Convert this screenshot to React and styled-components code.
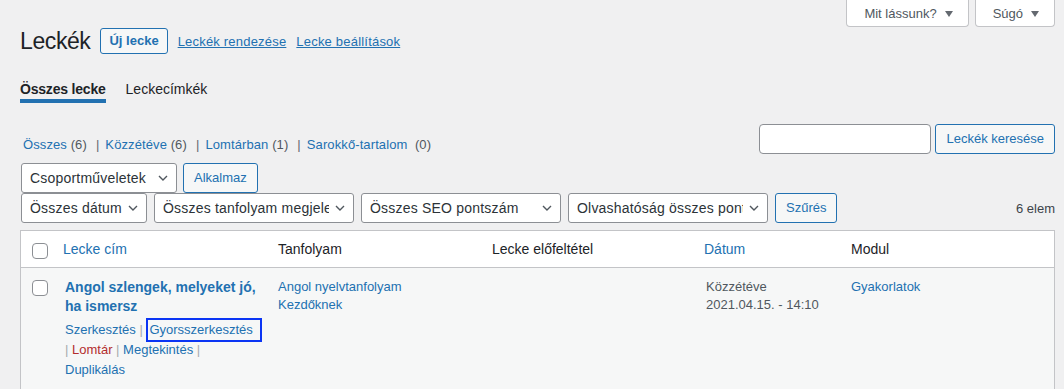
import React from 'react';
import styled, { createGlobalStyle } from 'styled-components';

const GlobalStyle = createGlobalStyle`
  html, body {
    margin: 0;
    background: #f0f0f1;
  }
  body {
    font-family: "Liberation Sans", Arial, sans-serif;
    font-size: 13px;
    color: #3c434a;
  }
  a {
    color: #2271b1;
    text-decoration: none;
  }
`;

// table column widths, shared by header and rows
const columns = '34px 213px 214px 214px 145px 1fr';

const Page = styled.div`
  padding: 0 9px 0 20px;
`;

/* screen options / help tabs */
const ScreenMeta = styled.div`
  display: flex;
  justify-content: flex-end;
  gap: 6px;
`;

const MetaButton = styled.button`
  height: 27px;
  box-sizing: border-box;
  display: flex;
  align-items: center;
  gap: 8px;
  padding: 0 15px 0 17px;
  margin: 0;
  background: #fff;
  border: 1px solid #c3c4c7;
  border-top: 0;
  border-radius: 0 0 4px 4px;
  color: #50575e;
  font-family: inherit;
  font-size: 13px;
`;

const Caret = styled.span`
  width: 0;
  height: 0;
  border-left: 4px solid transparent;
  border-right: 4px solid transparent;
  border-top: 6px solid #646970;
  margin-top: 1px;
`;

/* heading */
const TitleRow = styled.div`
  display: flex;
  align-items: center;
  gap: 10px;
  height: 26px;
  margin-top: 1px;
`;

const Heading = styled.h1`
  margin: 0;
  font-size: 23px;
  font-weight: 400;
  line-height: 26px;
  letter-spacing: -0.4px;
  color: #1d2327;
`;

const TitleAction = styled.a`
  box-sizing: border-box;
  height: 26px;
  padding: 0 8px;
  border: 1px solid #2271b1;
  border-radius: 3px;
  background: #f6f7f7;
  font-size: 13px;
  font-weight: 600;
  line-height: 24px;
`;

const TitleLink = styled.a`
  font-size: 13px;
  letter-spacing: 0.2px;
  text-decoration: underline !important;
`;

/* tabs */
const Tabs = styled.nav`
  display: flex;
  gap: 20px;
  margin-top: 26px;
`;

const Tab = styled.a`
  font-size: 14px;
  line-height: 18px;
  color: #1d2327;
  font-weight: ${(p) => (p.$active ? 600 : 400)};
  letter-spacing: ${(p) => (p.$active ? '-0.2px' : '0')};
  padding-bottom: 1px;
  border-bottom: 4px solid ${(p) => (p.$active ? '#2271b1' : 'transparent')};
`;

/* views + search */
const ListHeader = styled.div`
  display: flex;
  justify-content: space-between;
  align-items: flex-end;
  margin-top: 21px;
`;

const Views = styled.div`
  line-height: 18px;
  color: #50575e;
  padding-left: 3px;
  letter-spacing: 0.1px;
  white-space: nowrap;
`;

const Count = styled.span`
  color: #50575e;
`;

const ViewSep = styled.span`
  display: inline-block;
  margin: 0 6px 0 9px;
  color: #646970;
`;

const SearchBox = styled.div`
  display: flex;
  gap: 4px;
`;

const SearchInput = styled.input`
  width: 172px;
  height: 30px;
  box-sizing: border-box;
  margin: 0;
  padding: 0 8px;
  border: 1px solid #8c8f94;
  border-radius: 4px;
  background: #fff;
  font-family: inherit;
  font-size: 14px;
`;

const Button = styled.button`
  height: 30px;
  box-sizing: border-box;
  margin: 0;
  padding: 0 10px;
  border: 1px solid #2271b1;
  border-radius: 3px;
  background: #f6f7f7;
  color: #2271b1;
  font-family: inherit;
  font-size: 13px;
  line-height: 28px;
  white-space: nowrap;
`;

/* bulk actions and filters */
const Toolbar = styled.div`
  margin-top: 9px;
`;

const ToolRow = styled.div`
  display: flex;
  align-items: center;
  gap: ${(p) => p.$gap}px;
  padding-left: 1px;
`;

const SelectBox = styled.div`
  width: ${(p) => p.$w}px;
  height: 30px;
  box-sizing: border-box;
  display: flex;
  align-items: center;
  padding: 0 8px;
  border: 1px solid #8c8f94;
  border-radius: 3px;
  background: #fff;
  color: #2c3338;
  font-size: 14px;
  letter-spacing: 0.2px;
  white-space: nowrap;
`;

const SelectText = styled.span`
  flex: 1;
  min-width: 0;
  overflow: hidden;
`;

const ChevronIcon = styled.svg`
  flex: none;
  margin-left: 6px;
`;

const ItemCount = styled.span`
  margin-left: auto;
  color: #3c434a;
`;

function Select({ width, children }) {
  return (
    <SelectBox $w={width}>
      <SelectText>{children}</SelectText>
      <ChevronIcon width="10" height="6" viewBox="0 0 10 6">
        <path d="M1 1l4 4 4-4" fill="none" stroke="#50575e" strokeWidth="1.4" />
      </ChevronIcon>
    </SelectBox>
  );
}

/* list table */
const Table = styled.div`
  margin-top: 7px;
  border: 1px solid #c3c4c7;
  background: #fff;
`;

const HeaderRow = styled.div`
  display: grid;
  grid-template-columns: ${columns};
  border-bottom: 1px solid #c3c4c7;
  background: #fff;
`;

const BodyRow = styled.div`
  display: grid;
  grid-template-columns: ${columns};
  background: #f6f7f7;
`;

const HeadCell = styled.div`
  padding: 8px 10px 8px ${(p) => (p.$sortable ? 8 : 10)}px;
  font-size: 14px;
  line-height: 20px;
  color: #1d2327;
`;

const CheckCell = styled.div`
  padding: 12px 0 0 11px;
`;

const Checkbox = styled.span`
  display: block;
  width: 16px;
  height: 16px;
  box-sizing: border-box;
  border: 1px solid #8c8f94;
  border-radius: 4px;
  background: #fff;
`;

const Cell = styled.div`
  padding: 10px 10px 10px;
  font-size: 13px;
  line-height: 18px;
  color: ${(p) => (p.$muted ? '#50575e' : '#3c434a')};
`;

const RowTitle = styled.a`
  font-size: 14px;
  font-weight: 600;
  line-height: 18px;
`;

const RowActions = styled.div`
  margin-top: 4px;
  line-height: 20px;
  color: #a7aaad;
  white-space: nowrap;
`;

const ActionLink = styled.a`
  color: ${(p) => (p.$danger ? '#b32d2e' : '#2271b1')};
  ${(p) =>
    p.$focused &&
    `
    padding: 2px 7px 3px 1px;
    border: 2px solid #0b35f4;
  `}
`;

export default function App() {
  return (
    <Page>
      <GlobalStyle />
      <ScreenMeta>
        <MetaButton>
          Mit lássunk? <Caret />
        </MetaButton>
        <MetaButton>
          Súgó <Caret />
        </MetaButton>
      </ScreenMeta>

      <TitleRow>
        <Heading>Leckék</Heading>
        <TitleAction href="#">Új lecke</TitleAction>
        <TitleLink href="#">Leckék rendezése</TitleLink>
        <TitleLink href="#">Lecke beállítások</TitleLink>
      </TitleRow>

      <Tabs>
        <Tab $active>Összes lecke</Tab>
        <Tab>Leckecímkék</Tab>
      </Tabs>

      <ListHeader>
        <Views>
          <a href="#">Összes</a> <Count>(6)</Count>
          <ViewSep>|</ViewSep>
          <a href="#">Közzétéve</a> <Count>(6)</Count>
          <ViewSep>|</ViewSep>
          <a href="#">Lomtárban</a> <Count>(1)</Count>
          <ViewSep>|</ViewSep>
          <a href="#">Sarokkő-tartalom</a> {'\u00a0'}
          <Count>(0)</Count>
        </Views>
        <SearchBox>
          <SearchInput type="search" />
          <Button>Leckék keresése</Button>
        </SearchBox>
      </ListHeader>

      <Toolbar>
        <ToolRow $gap={6}>
          <Select width={156}>Csoportműveletek</Select>
          <Button>Alkalmaz</Button>
        </ToolRow>
        <ToolRow $gap={7}>
          <Select width={126}>Összes dátum</Select>
          <Select width={200}>Összes tanfolyam megjelenítése</Select>
          <Select width={200}>Összes SEO pontszám</Select>
          <Select width={200}>Olvashatóság összes pontszám</Select>
          <Button>Szűrés</Button>
          <ItemCount>6 elem</ItemCount>
        </ToolRow>
      </Toolbar>

      <Table>
        <HeaderRow>
          <CheckCell>
            <Checkbox />
          </CheckCell>
          <HeadCell $sortable>
            <a href="#">Lecke cím</a>
          </HeadCell>
          <HeadCell>Tanfolyam</HeadCell>
          <HeadCell>Lecke előfeltétel</HeadCell>
          <HeadCell $sortable>
            <a href="#">Dátum</a>
          </HeadCell>
          <HeadCell>Modul</HeadCell>
        </HeaderRow>
        <BodyRow>
          <CheckCell>
            <Checkbox />
          </CheckCell>
          <Cell>
            <RowTitle href="#">
              Angol szlengek, melyeket jó,
              <br />
              ha ismersz
            </RowTitle>
            <RowActions>
              <div>
                <ActionLink href="#">Szerkesztés</ActionLink> |{' '}
                <ActionLink href="#" $focused>
                  Gyorsszerkesztés
                </ActionLink>
              </div>
              <div>
                | <ActionLink href="#" $danger>Lomtár</ActionLink> |{' '}
                <ActionLink href="#">Megtekintés</ActionLink> |
              </div>
              <div>
                <ActionLink href="#">Duplikálás</ActionLink>
              </div>
            </RowActions>
          </Cell>
          <Cell>
            <a href="#">
              Angol nyelvtanfolyam
              <br />
              Kezdőknek
            </a>
          </Cell>
          <Cell />
          <Cell $muted>
            Közzétéve
            <br />
            2021.04.15. - 14:10
          </Cell>
          <Cell>
            <a href="#">Gyakorlatok</a>
          </Cell>
        </BodyRow>
      </Table>
    </Page>
  );
}
